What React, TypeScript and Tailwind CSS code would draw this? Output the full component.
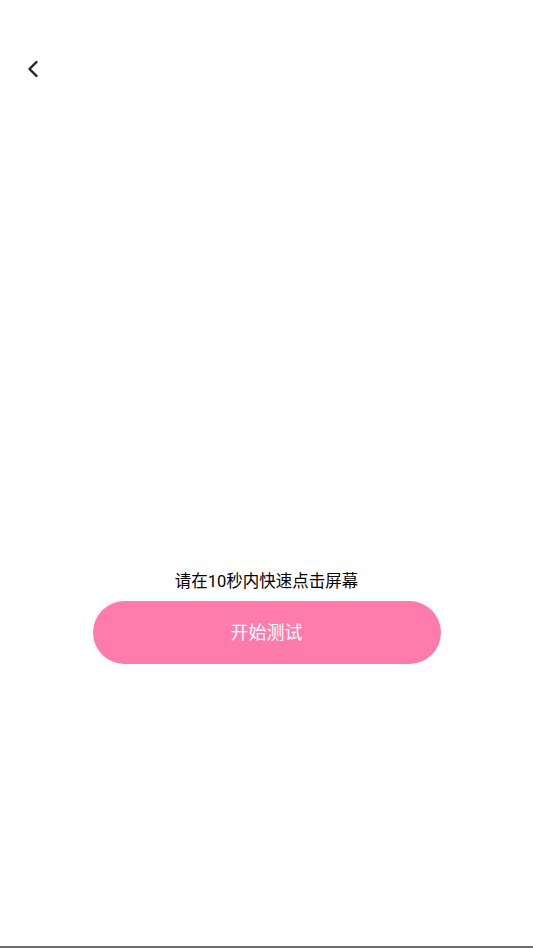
import { ChevronLeft } from 'lucide-react'

export default function App() {
  return (
    <div
      className="h-[948px] w-full bg-white flex flex-col border-b-2 border-[#6e6e6e]"
      style={{ fontFamily: 'Roboto, "Noto Sans CJK SC", sans-serif' }}
    >
      {/* header */}
      <div className="pt-[55px] pl-[19px]">
        <button className="w-7 h-7 flex items-center justify-center text-[#222]">
          <ChevronLeft className="w-7 h-7" strokeWidth={2.1} />
        </button>
      </div>

      {/* content */}
      <div className="flex flex-col items-center mt-[488px]">
        <p className="text-[16.5px] leading-[22px] text-black">请在10秒内快速点击屏幕</p>
        <button className="mt-[8px] w-[348px] h-[63px] rounded-full bg-[#ff7bac] text-white text-[18px] flex items-center justify-center">
          开始测试
        </button>
      </div>
    </div>
  )
}
